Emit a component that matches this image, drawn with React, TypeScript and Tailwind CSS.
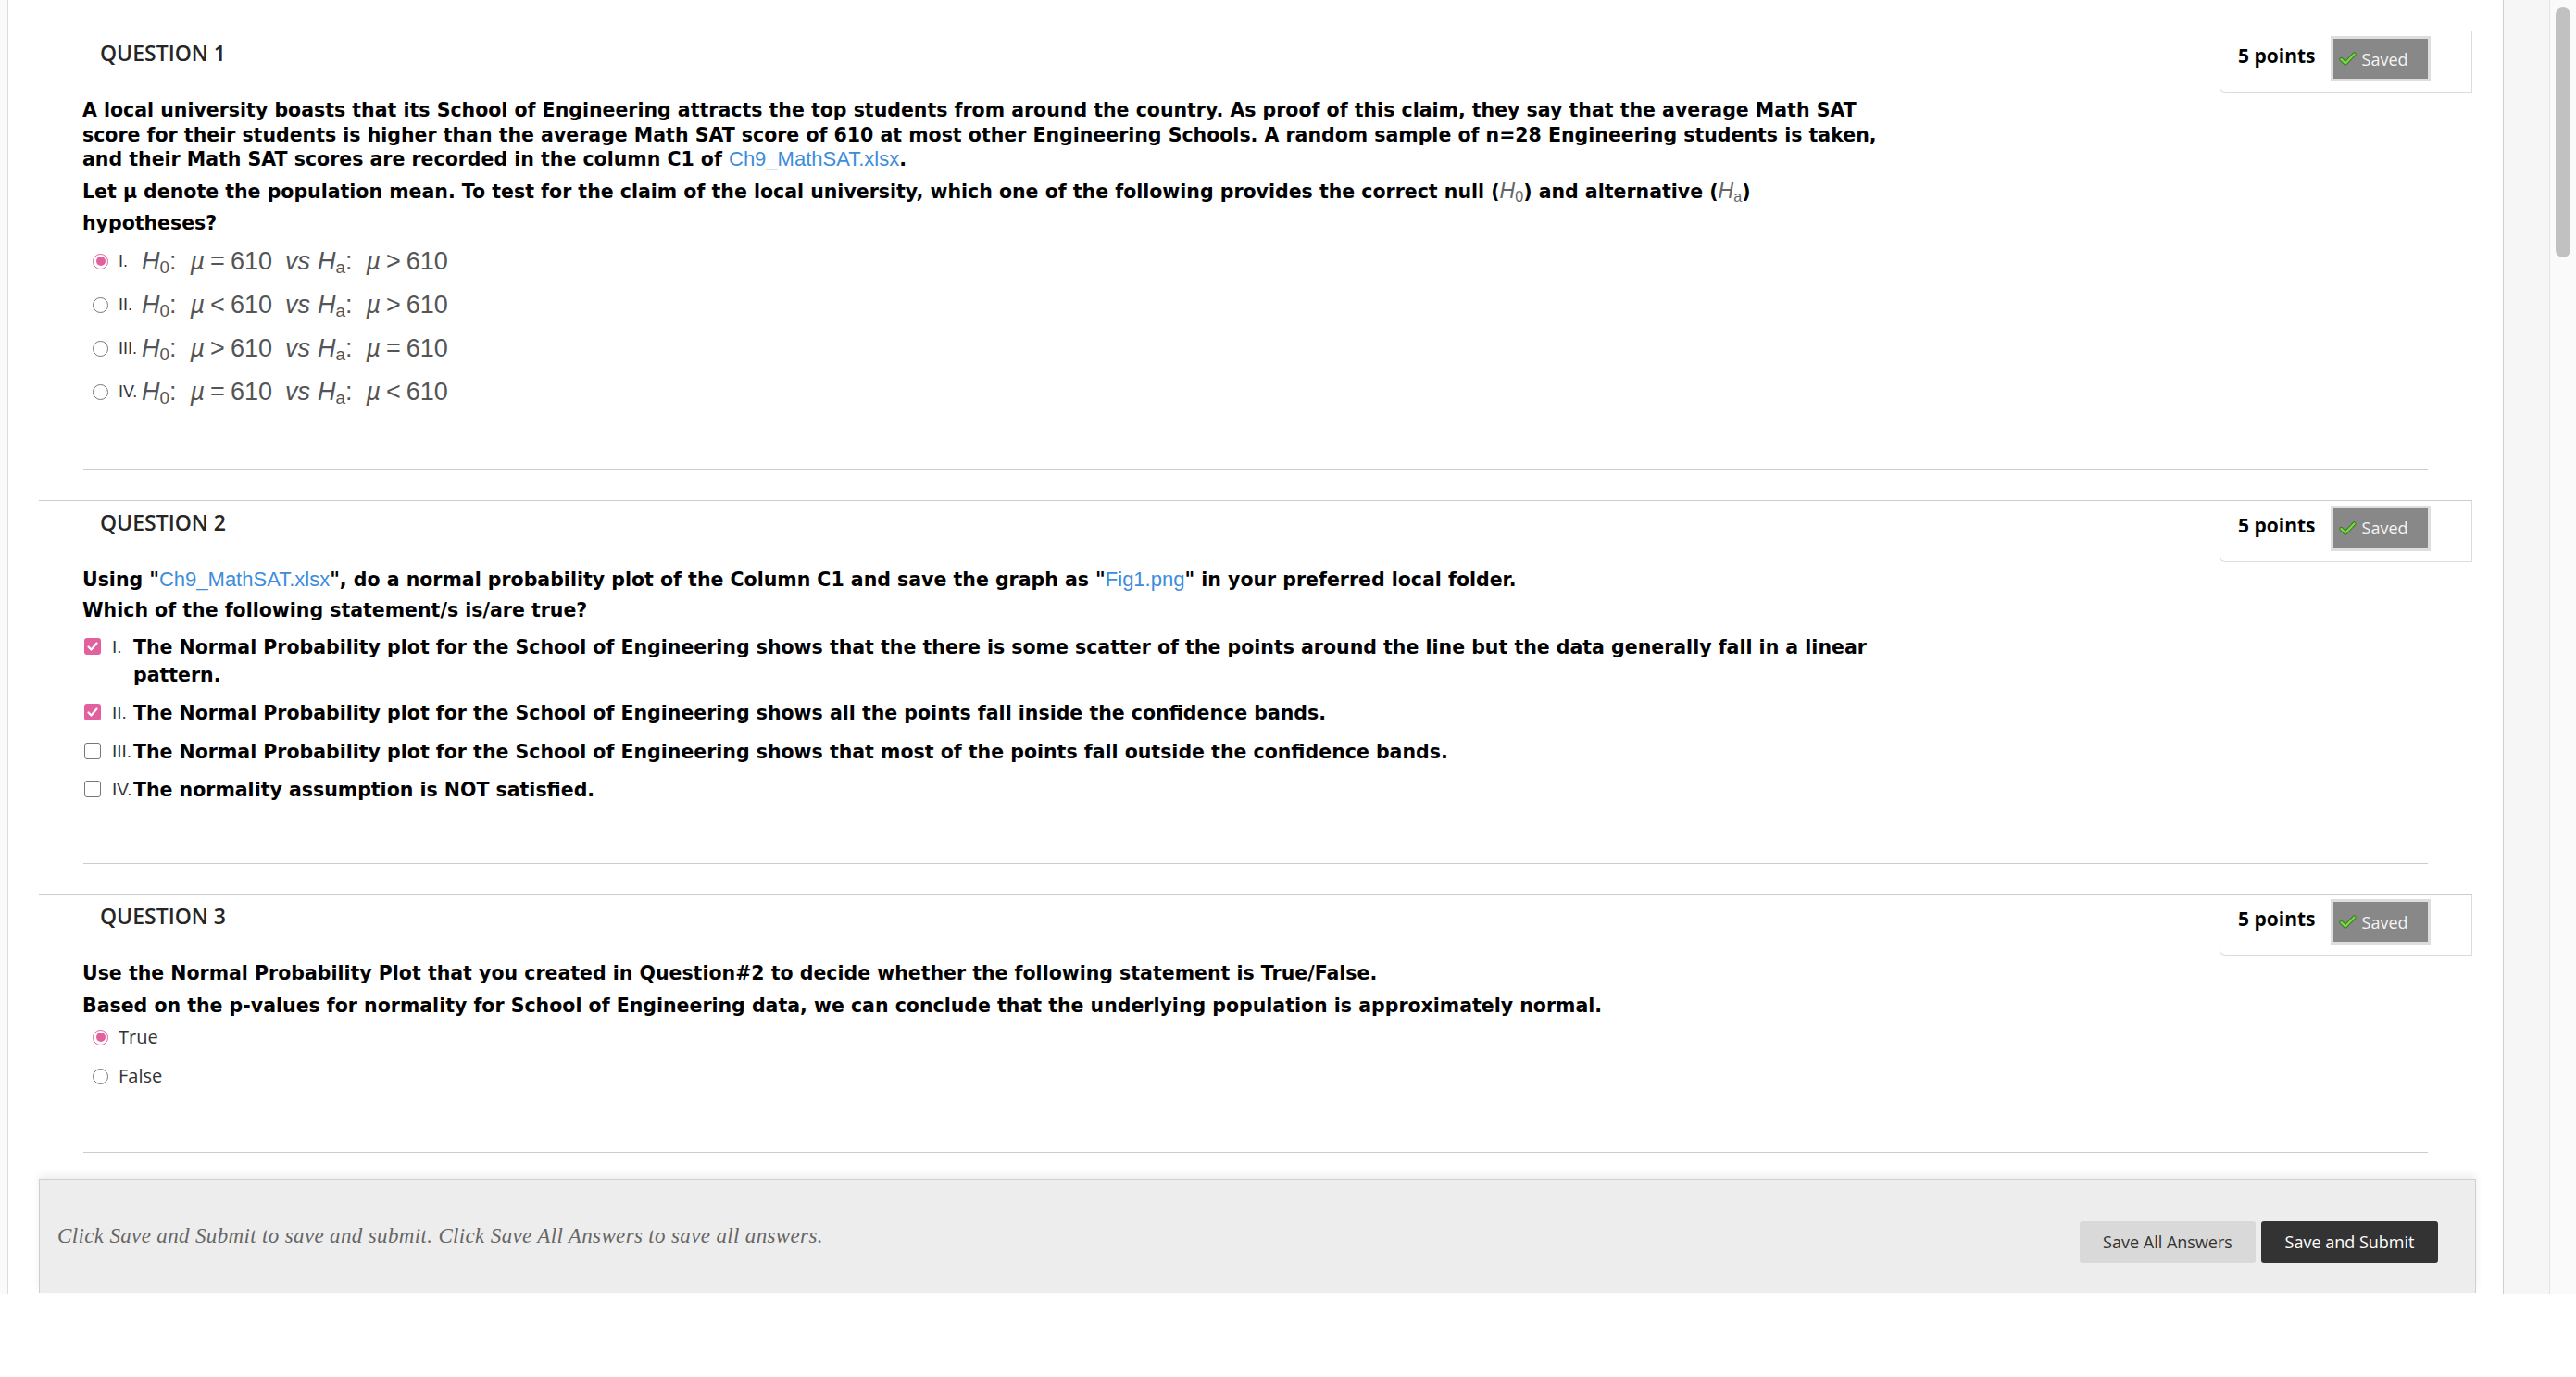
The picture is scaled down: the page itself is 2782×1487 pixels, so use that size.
import React from "react";

const sans = "font-['Liberation_Sans',Arial,sans-serif]";
const body = "font-['DejaVu_Sans',Verdana,sans-serif]";
const open = "font-['Open_Sans','Liberation_Sans',sans-serif]";
const link = "text-[22px] text-[#3d8ddb]";

function Radio({ checked }: { checked?: boolean }) {
  if (checked) {
    return (
      <span className="flex h-[17px] w-[17px] shrink-0 items-center justify-center rounded-full border-[1.5px] border-[#e2609d] bg-white">
        <span className="h-[10px] w-[10px] rounded-full bg-[#e2609d]" />
      </span>
    );
  }
  return <span className="h-[17px] w-[17px] shrink-0 rounded-full border-[1.5px] border-[#777] bg-white" />;
}

function Checkbox({ checked }: { checked?: boolean }) {
  if (checked) {
    return (
      <span className="mt-[5px] flex h-[18px] w-[18px] shrink-0 items-center justify-center rounded-[3px] bg-[#e2609d]">
        <svg width="14" height="14" viewBox="0 0 14 14">
          <path d="M2.5 7.5 L5.5 10.5 L11.5 3.5" fill="none" stroke="#fff" strokeWidth="2.2" strokeLinecap="round" strokeLinejoin="round" />
        </svg>
      </span>
    );
  }
  return <span className="mt-[5px] h-[18px] w-[18px] shrink-0 rounded-[3px] border-[1.5px] border-[#777] bg-white" />;
}

function SavedBadge() {
  return (
    <div className="mt-[5px] flex h-[49px] w-[108px] items-center gap-[6px] border-[3px] border-[#dedede] bg-[#888] pl-[6px]">
      <svg width="19" height="17" viewBox="0 0 19 17">
        <path d="M2.5 9 L7 13.5 L16.5 3.5" fill="none" stroke="#2f7d16" strokeWidth="4.2" strokeLinecap="round" strokeLinejoin="round" />
        <path d="M2.5 9 L7 13.5 L16.5 3.5" fill="none" stroke="#7fd44c" strokeWidth="2.4" strokeLinecap="round" strokeLinejoin="round" />
      </svg>
      <span className={`${open} text-[18px] leading-none text-[#f4f4f4]`}>Saved</span>
    </div>
  );
}

function Header({ n }: { n: number }) {
  return (
    <div className="flex h-[66px] items-start justify-between">
      <h2 className={`${open} pl-[66px] pt-[8px] text-[23px] leading-[31px] font-semibold text-[#262626]`}>QUESTION {n}</h2>
      <div className="flex h-[66px] w-[273px] items-start gap-[16px] rounded-bl-[6px] border-b border-l border-r border-[#dcdcdc] pl-[19px]">
        <span className={`${open} mt-[11px] text-[21px] leading-[30px] font-bold text-black`}>5 points</span>
        <SavedBadge />
      </div>
    </div>
  );
}

function Sub({ base, sub }: { base: string; sub: string }) {
  return (
    <span className="italic">
      {base}
      <sub className="text-[0.7em] not-italic">{sub}</sub>
    </span>
  );
}

function Hyp({ op1, op2 }: { op1: string; op2: string }) {
  return (
    <span className={`${sans} whitespace-nowrap text-[27px] leading-none text-[#555]`}>
      <Sub base="H" sub="0" />:<span className="ml-[15px] italic">µ</span>
      <span className="mx-[6px]">{op1}</span>610<span className="ml-[14px] italic">vs</span>
      <span className="ml-[8px]">
        <Sub base="H" sub="a" />
      </span>
      :<span className="ml-[15px] italic">µ</span>
      <span className="mx-[6px]">{op2}</span>610
    </span>
  );
}

function Question1() {
  const opts = [
    { l: "I.", a: "=", b: ">", c: true },
    { l: "II.", a: "<", b: ">" },
    { l: "III.", a: ">", b: "=" },
    { l: "IV.", a: "=", b: "<" },
  ];
  return (
    <section className="border-t border-[#ccc]">
      <Header n={1} />
      <div className={`${body} w-[1991px] pl-[47px] text-[20.5px] font-bold text-black`}>
        <p className="mt-[6px] leading-[26.5px]">
          A local university boasts that its School of Engineering attracts the top students from around the country. As proof of this claim, they say that the average Math SAT score for their students is higher than the average Math SAT score of 610 at most other Engineering Schools. A random sample of n=28 Engineering students is taken, and their Math SAT scores are recorded in the column C1 of{" "}
          <span className={`${sans} ${link} font-normal`}>Ch9_MathSAT.xlsx</span>.
        </p>
        <p className="mt-[3px] leading-[34px]">
          Let µ denote the population mean. To test for the claim of the local university, which one of the following provides the correct null (
          <span className={`${sans} text-[23px] font-normal text-[#666]`}>
            <Sub base="H" sub="0" />
          </span>
          ) and alternative (
          <span className={`${sans} text-[23px] font-normal text-[#666]`}>
            <Sub base="H" sub="a" />
          </span>
          ) hypotheses?
        </p>
      </div>
      <div className="mt-[1px] pl-[58px]">
        {opts.map((o) => (
          <div key={o.l} className="flex h-[47px] items-center">
            <Radio checked={o.c} />
            <span className={`${sans} w-[36px] shrink-0 whitespace-nowrap pl-[11px] text-[18px] text-[#333]`}>{o.l}</span>
            <Hyp op1={o.a} op2={o.b} />
          </div>
        ))}
      </div>
      <div className="mx-[48px] mt-[60px] border-t border-[#ccc]" />
    </section>
  );
}

function Question2() {
  const opts = [
    { l: "I.", t: "The Normal Probability plot for the School of Engineering shows that the there is some scatter of the points around the line but the data generally fall in a linear pattern.", c: true },
    { l: "II.", t: "The Normal Probability plot for the School of Engineering shows all the points fall inside the confidence bands.", c: true },
    { l: "III.", t: "The Normal Probability plot for the School of Engineering shows that most of the points fall outside the confidence bands." },
    { l: "IV.", t: "The normality assumption is NOT satisfied." },
  ];
  return (
    <section className="mt-[32px] border-t border-[#ccc]">
      <Header n={2} />
      <div className={`${body} w-[2007px] pl-[47px] text-[20.5px] font-bold text-black`}>
        <p className="mt-[6px] leading-[26.5px]">
          Using "<span className={`${sans} ${link} font-normal`}>Ch9_MathSAT.xlsx</span>", do a normal probability plot of the Column C1 and save the graph as "
          <span className={`${sans} ${link} font-normal`}>Fig1.png</span>" in your preferred local folder.
        </p>
        <p className="mt-[7px] leading-[26.5px]">Which of the following statement/s is/are true?</p>
        <div className="mt-[11px] flex flex-col gap-[11.5px] pl-[2px]">
          {opts.map((o) => (
            <div key={o.l} className="flex items-start">
              <Checkbox checked={o.c} />
              <span className={`${sans} w-[35px] shrink-0 whitespace-nowrap pl-[12px] text-[19px] leading-[30px] font-normal text-[#333]`}>{o.l}</span>
              <span className="w-[1904px] leading-[30px]">{o.t}</span>
            </div>
          ))}
        </div>
      </div>
      <div className="mx-[48px] mt-[64px] border-t border-[#ccc]" />
    </section>
  );
}

function Question3() {
  return (
    <section className="mt-[32px] border-t border-[#ccc]">
      <Header n={3} />
      <div className={`${body} w-[2007px] pl-[47px] text-[20.5px] font-bold text-black`}>
        <p className="mt-[6px] leading-[26.5px]">
          Use the Normal Probability Plot that you created in Question#2 to decide whether the following statement is True/False.
        </p>
        <p className="mt-[8px] leading-[26.5px]">
          Based on the p-values for normality for School of Engineering data, we can conclude that the underlying population is approximately normal.
        </p>
      </div>
      <div className="pl-[58px]">
        {[
          { l: "True", c: true },
          { l: "False" },
        ].map((o) => (
          <div key={o.l} className="flex h-[42px] items-center gap-[11px]">
            <Radio checked={o.c} />
            <span className={`${open} text-[20px] text-[#333]`}>{o.l}</span>
          </div>
        ))}
      </div>
      <div className="mx-[48px] mt-[61px] border-t border-[#ccc]" />
    </section>
  );
}

export default function App() {
  return (
    <div className="h-[1487px] w-full bg-white">
      <div className="flex h-[1397px]">
        <div className="w-[9px] shrink-0 border-r border-[#dcdcdc] bg-[#fafafa]" />
        <main className="flex min-w-0 flex-1 flex-col px-[33px] pt-[33px]">
          <Question1 />
          <Question2 />
          <Question3 />
          <div className="mt-[28px] mr-[-4px] flex h-[123px] items-center justify-between border border-b-0 border-[#cfcfcf] bg-[#ededed] pl-[19px] pr-[40px] shadow-[0_-4px_8px_rgba(0,0,0,0.07)]">
            <span className="font-['Liberation_Serif','Times_New_Roman',serif] text-[23px] tracking-[0.35px] italic text-[#666]">
              Click Save and Submit to save and submit. Click Save All Answers to save all answers.
            </span>
            <div className="mt-[12px] flex gap-[6px]">
              <button className={`${open} h-[45px] w-[190px] rounded-[3px] bg-[#d9d9d9] text-[18px] text-[#333]`}>Save All Answers</button>
              <button className={`${open} h-[45px] w-[191px] rounded-[3px] bg-[#333] text-[18px] text-white`}>Save and Submit</button>
            </div>
          </div>
        </main>
        <div className="w-[50px] shrink-0 border-l border-[#cfcfcf] bg-[#f6f6f6]" />
        <div className="w-[29px] shrink-0 border-l border-[#e4e4e4] bg-[#fafafa] pl-[6px] pt-[8px]">
          <div className="h-[270px] w-[16px] rounded-full bg-[#c1c1c1]" />
        </div>
      </div>
    </div>
  );
}
